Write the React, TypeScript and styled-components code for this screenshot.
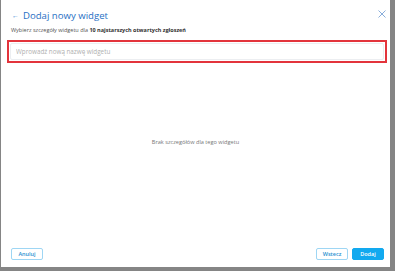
import React from "react";
import styled, { createGlobalStyle } from "styled-components";

const GlobalStyle = createGlobalStyle`
  html, body {
    margin: 0;
    padding: 0;
    background: #858585;
    font-family: "Open Sans", "Liberation Sans", sans-serif;
  }
  * { box-sizing: border-box; }
`;

const Modal = styled.div`
  display: flex;
  flex-direction: column;
  width: 389px;
  height: 267px;
  margin-left: 1px;
  background: #fff;
`;

const Header = styled.div`
  display: flex;
  justify-content: space-between;
  align-items: flex-start;
  padding: 9px 4px 0 11px;
`;

const Title = styled.h1`
  display: flex;
  align-items: center;
  gap: 4px;
  margin: 0;
  font-size: 9.6px;
  font-weight: 400;
  color: #276fc4;
  line-height: 14px;
`;

const BackArrow = styled.span`
  font-size: 7px;
  color: #4a8ad6;
`;

const Close = styled.button`
  border: none;
  background: none;
  padding: 0;
  margin-top: 1px;
  width: 8px;
  height: 8px;
  display: flex;
  cursor: pointer;
`;

const Subtitle = styled.p`
  margin: 3px 0 0 10px;
  font-size: 5.5px;
  color: #555;
  line-height: 8px;
`;

const Highlight = styled.b`
  font-weight: 700;
  color: #333;
`;

const InputFrame = styled.div`
  margin: 6px 3px 0 6px;
  border: 2px solid #e3343c;
  padding: 1px;
`;

const NameInput = styled.input`
  display: block;
  width: 100%;
  height: 17px;
  border: 1px solid #eceef1;
  border-radius: 2px;
  padding: 0 5px;
  font-family: inherit;
  font-size: 6.3px;
  color: #333;
  outline: none;
  &::placeholder {
    color: #b0b0b0;
  }
`;

const Body = styled.div`
  flex: 1;
  display: flex;
  align-items: center;
  justify-content: center;
  padding-bottom: 27px;
  font-size: 5.6px;
  color: #777;
`;

const Footer = styled.div`
  display: flex;
  align-items: center;
  gap: 4px;
  padding: 0 6px 7px 10px;
`;

const Spacer = styled.div`
  flex: 1;
`;

const Btn = styled.button<{ $primary?: boolean }>`
  width: 32px;
  height: 12px;
  padding: 0;
  border-radius: 2px;
  font-family: inherit;
  font-size: 5.5px;
  font-weight: 600;
  line-height: 10px;
  cursor: pointer;
  border: 1px solid ${(p) => (p.$primary ? "#12a9ef" : "#9ed6f4")};
  background: ${(p) => (p.$primary ? "#12a9ef" : "#fff")};
  color: ${(p) => (p.$primary ? "#fff" : "#2a8fd0")};
`;

export default function App() {
  return (
    <>
      <GlobalStyle />
      <Modal>
        <Header>
          <Title>
            <BackArrow>←</BackArrow>
            Dodaj nowy widget
          </Title>
          <Close aria-label="Zamknij">
            <svg width="8" height="8" viewBox="0 0 8 8">
              <path d="M0.5 0.5L7.5 7.5M7.5 0.5L0.5 7.5" stroke="#8aaedb" strokeWidth="1" />
            </svg>
          </Close>
        </Header>
        <Subtitle>
          Wybierz szczegóły widgetu dla <Highlight>10 najstarszych otwartych zgłoszeń</Highlight>
        </Subtitle>
        <InputFrame>
          <NameInput placeholder="Wprowadź nową nazwę widgetu" />
        </InputFrame>
        <Body>Brak szczegółów dla tego widgetu</Body>
        <Footer>
          <Btn>Anuluj</Btn>
          <Spacer />
          <Btn>Wstecz</Btn>
          <Btn $primary>Dodaj</Btn>
        </Footer>
      </Modal>
    </>
  );
}
